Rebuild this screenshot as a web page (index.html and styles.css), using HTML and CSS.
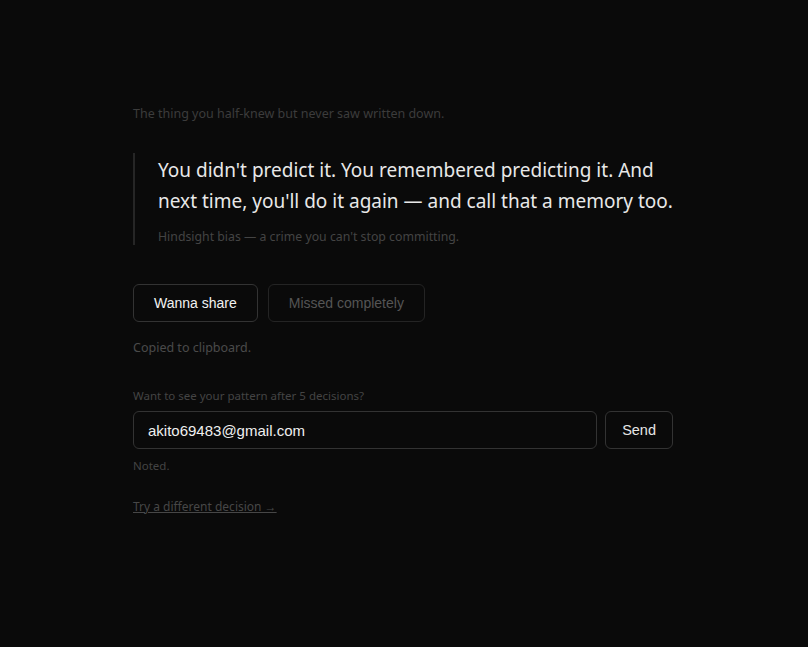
FILE: index.html
```html
<!DOCTYPE html>
<html>
<head>
    <meta charset="UTF-8">
    <meta name="viewport" content="width=device-width, initial-scale=1.0">
    <title>Hindsight</title>
    <link rel="stylesheet" href="styles.css">
</head>
<body>
    <div class="page">
        <p class="intro">The thing you half-knew but never saw written down.</p>

        <blockquote class="quote">
            <p class="quote-text">You didn't predict it. You remembered predicting it. And next time, you'll do it again — and call that a memory too.</p>
            <p class="quote-note">Hindsight bias — a crime you can't stop committing.</p>
        </blockquote>

        <div class="actions">
            <button class="btn btn-main" type="button">Wanna share</button>
            <button class="btn btn-muted" type="button">Missed completely</button>
        </div>
        <p class="status">Copied to clipboard.</p>

        <form class="signup">
            <label class="signup-label" for="email">Want to see your pattern after 5 decisions?</label>
            <div class="signup-row">
                <input class="signup-input" id="email" type="email" value="akito69483@gmail.com">
                <button class="btn btn-send" type="submit">Send</button>
            </div>
            <p class="signup-note">Noted.</p>
        </form>

        <a class="retry" href="#">Try a different decision →</a>
    </div>
</body>
</html>
```

FILE: styles.css
```css
body {
    margin: 0;
    background-color: #0a0a0a;
    font-family: 'Noto Sans', sans-serif;
    color: #e6e6e6;
}
.page {
    width: 540px;
    margin: 0 auto;
    padding: 105px 2px 0 0;
}
.intro {
    margin: 0 0 31px;
    font-size: 12.5px;
    color: #3c3c3c;
}
.quote {
    margin: 0;
    padding: 2px 0 0 23px;
    border-left: 2px solid #262626;
}
.quote-text {
    margin: 0;
    font-size: 19px;
    line-height: 31px;
    color: #e8e8e8;
}
.quote-note {
    margin: 11px 0 0;
    font-size: 12.3px;
    line-height: 17px;
    color: #444;
}
.actions {
    display: flex;
    gap: 10px;
    margin-top: 39px;
}
.btn {
    background-color: #0a0a0a;
    border: 1px solid #333;
    border-radius: 6px;
    font-family: 'Liberation Sans', Arial, sans-serif;
    font-size: 14px;
    height: 38px;
    padding: 0 20px;
    cursor: pointer;
}
.btn-main {
    color: #f2f2f2;
}
.btn-muted {
    color: #555;
    border-color: #242424;
}
.status {
    margin: 17px 0 0;
    font-size: 12.5px;
    color: #4a4a4a;
}
.signup {
    margin-top: 32px;
}
.signup-label {
    display: block;
    margin-bottom: 8px;
    font-size: 11.5px;
    color: #444;
}
.signup-row {
    display: flex;
    gap: 8px;
}
.signup-input {
    flex: 1;
    height: 38px;
    box-sizing: border-box;
    padding: 0 14px;
    background-color: #0a0a0a;
    border: 1px solid #333;
    border-radius: 6px;
    color: #f0f0f0;
    font-family: 'Liberation Sans', Arial, sans-serif;
    font-size: 15px;
}
.btn-send {
    color: #e6e6e6;
    padding: 0 16px;
    font-size: 14.5px;
}
.signup-note {
    margin: 9px 0 0;
    font-size: 11.5px;
    color: #444;
}
.retry {
    display: inline-block;
    margin-top: 25px;
    font-size: 12px;
    color: #474747;
    text-decoration: underline;
}
```
